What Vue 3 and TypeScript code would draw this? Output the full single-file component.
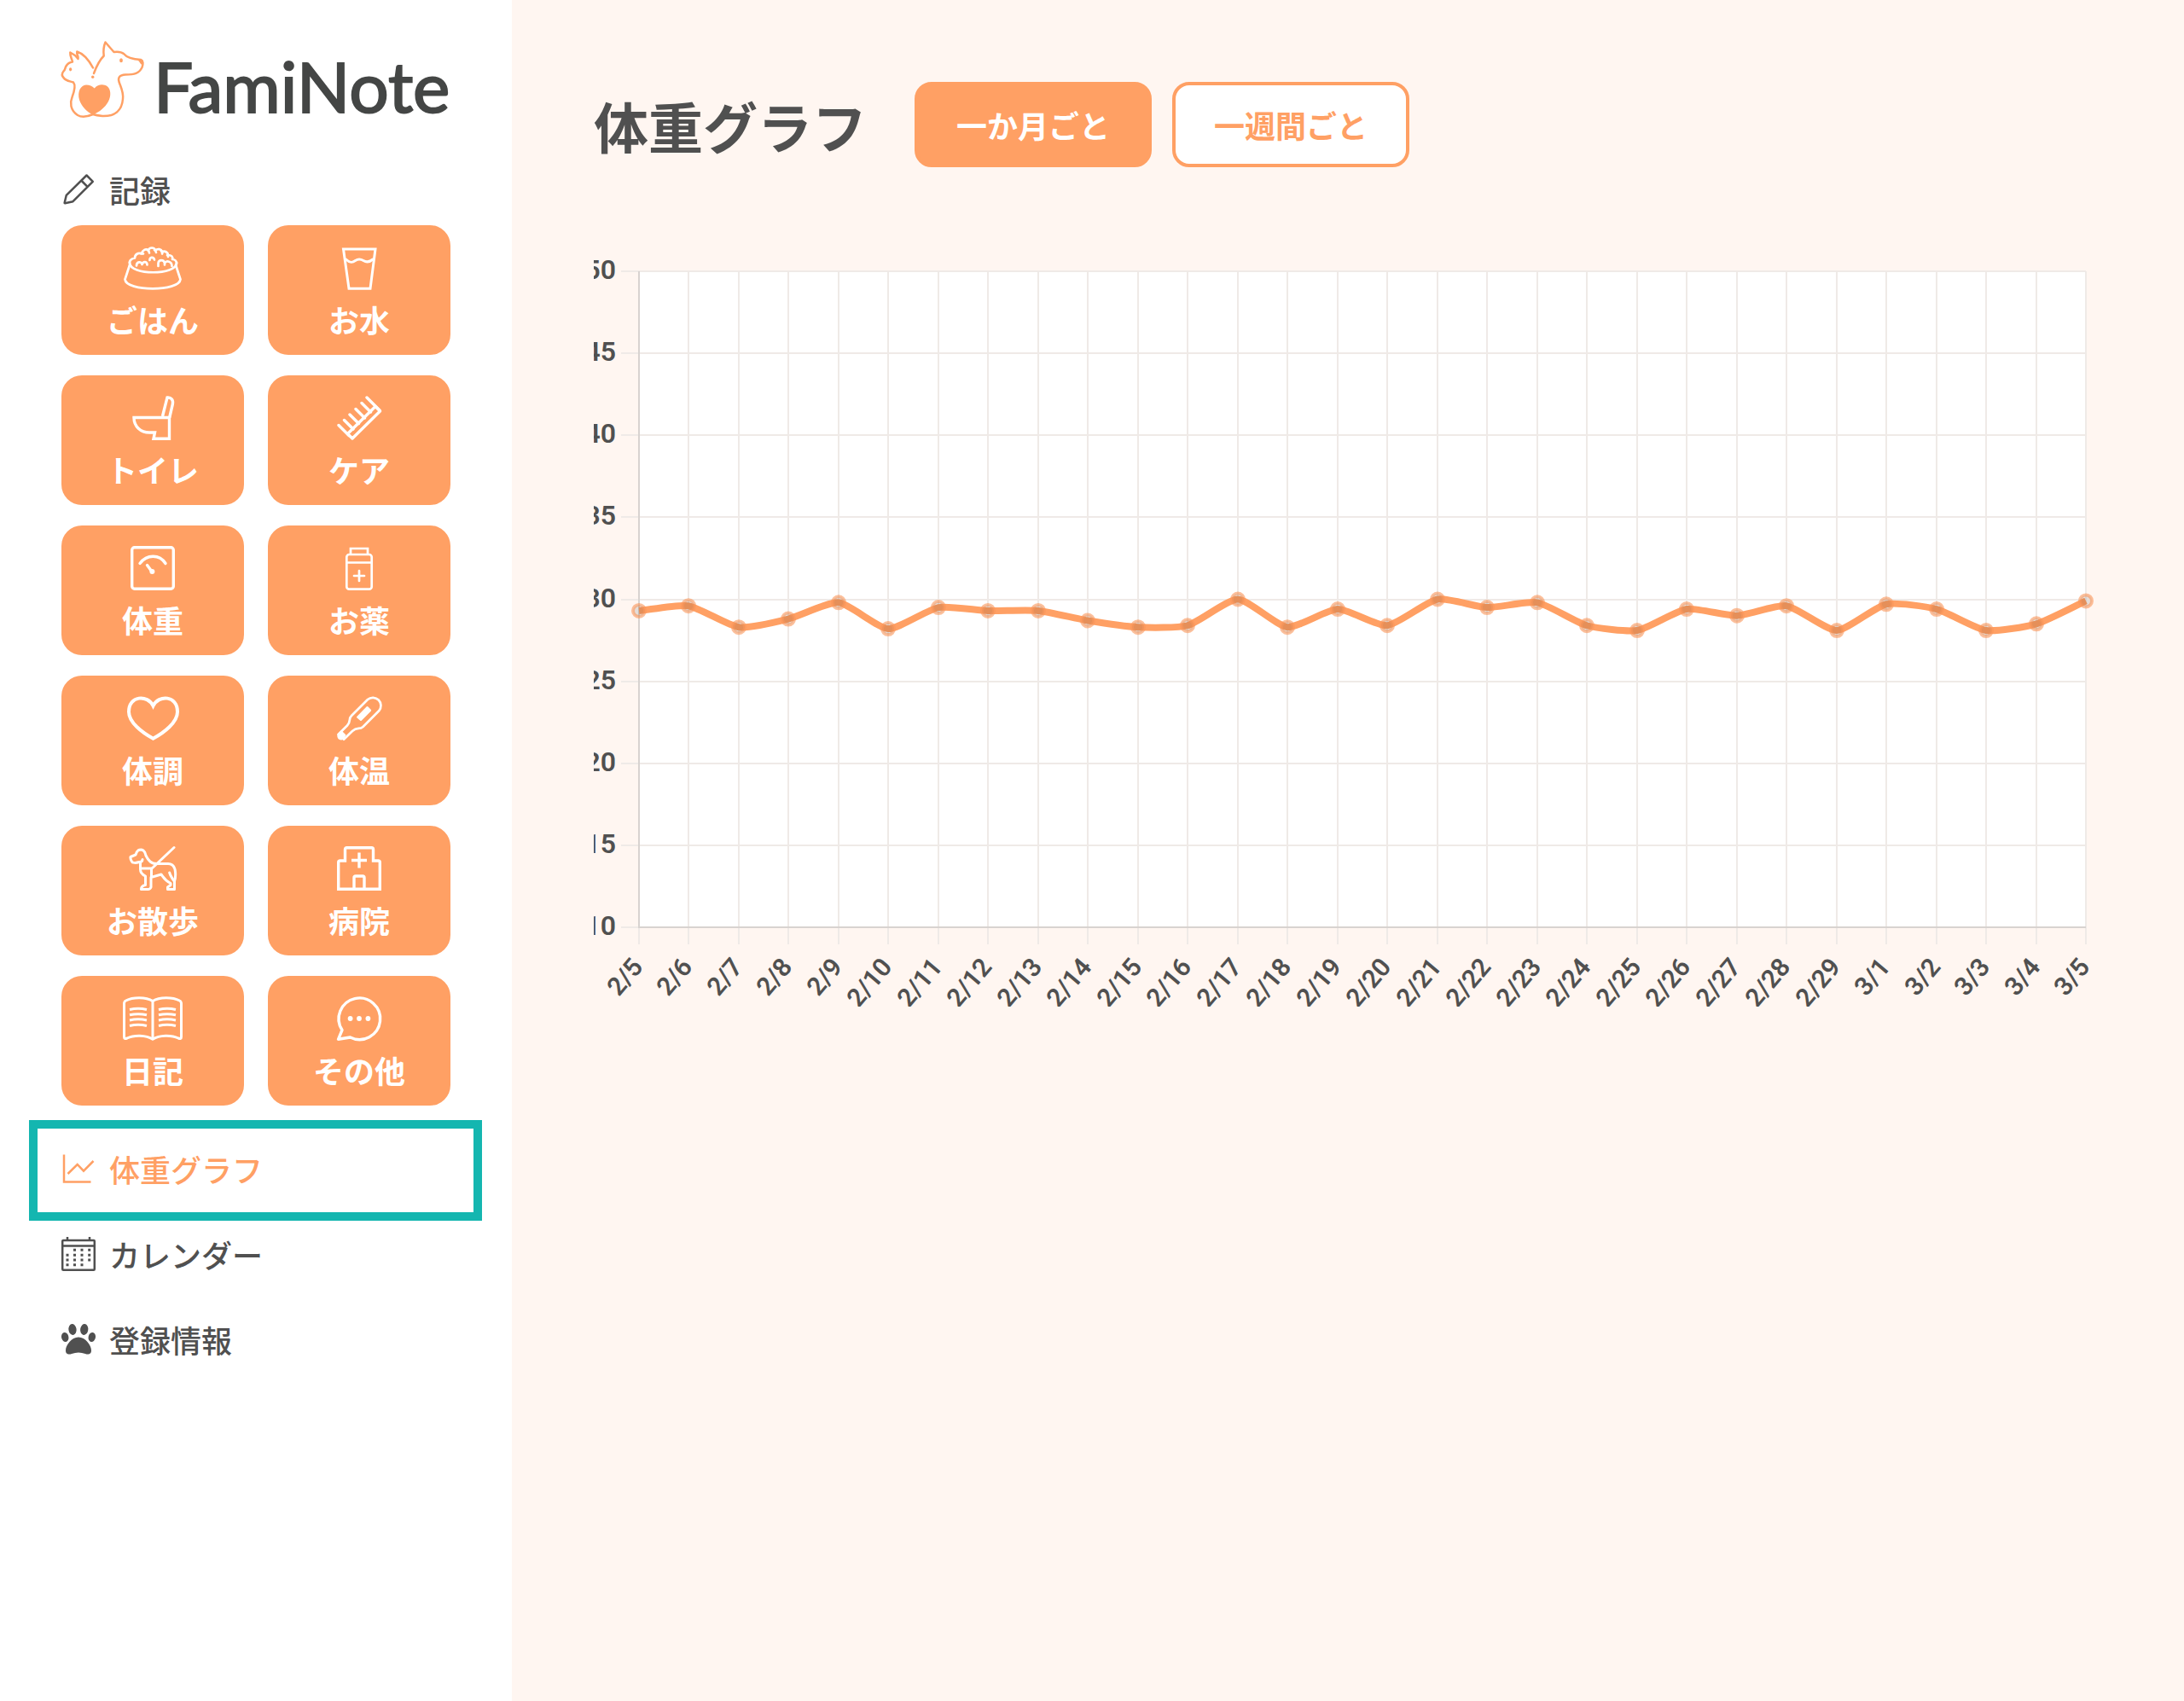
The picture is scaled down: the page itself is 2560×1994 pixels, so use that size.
<script setup lang="ts">
import { computed, ref } from 'vue'

interface Tile {
  label: string
  icon: string
}

type Range = 'month' | 'week'

const tiles: Tile[] = [
  { label: 'ごはん', icon: 'bowl' },
  { label: 'お水', icon: 'glass' },
  { label: 'トイレ', icon: 'toilet' },
  { label: 'ケア', icon: 'comb' },
  { label: '体重', icon: 'scale' },
  { label: 'お薬', icon: 'medicine' },
  { label: '体調', icon: 'heart' },
  { label: '体温', icon: 'thermometer' },
  { label: 'お散歩', icon: 'dog' },
  { label: '病院', icon: 'hospital' },
  { label: '日記', icon: 'book' },
  { label: 'その他', icon: 'chat' },
]

const range = ref<Range>('month')

const weights: number[] = [
  29.3, 29.6, 28.3, 28.8, 29.8, 28.2, 29.5, 29.3, 29.3, 28.7, 28.3, 28.4, 30, 28.3, 29.4,
  28.4, 30, 29.5, 29.8, 28.4, 28.1, 29.4, 29, 29.6, 28.1, 29.7, 29.4, 28.1, 28.5, 29.9,
]

const plot = { left: 53, right: 1749, top: 18, bottom: 787 }

const yTicks = [50, 45, 40, 35, 30, 25, 20, 15, 10].map((value) => ({
  value,
  y: Math.round(plot.top + ((50 - value) / 40) * (plot.bottom - plot.top)),
}))

const points = computed(() =>
  weights.map((weight, i) => ({
    label: i < 25 ? `2/${i + 5}` : `3/${i - 24}`,
    x: Math.round(plot.left + (i * (plot.right - plot.left)) / (weights.length - 1)),
    y: plot.top + ((50 - weight) / 40) * (plot.bottom - plot.top),
  })),
)

/* Smooth curve through all points; each knot shares one tangent. */
const linePath = computed(() => {
  const tension = 0.2
  const pts = points.value
  const knots = pts.map((p, i) => {
    const prev = pts[Math.max(i - 1, 0)]
    const next = pts[Math.min(i + 1, pts.length - 1)]
    const before = Math.hypot(p.x - prev.x, p.y - prev.y)
    const after = Math.hypot(next.x - p.x, next.y - p.y)
    const a = (tension * before) / (before + after)
    const b = (tension * after) / (before + after)
    const dx = next.x - prev.x
    const dy = next.y - prev.y
    return { p, inX: p.x - a * dx, inY: p.y - a * dy, outX: p.x + b * dx, outY: p.y + b * dy }
  })
  return knots
    .map((k, i) =>
      i === 0
        ? `M${k.p.x} ${k.p.y}`
        : `C${knots[i - 1].outX} ${knots[i - 1].outY} ${k.inX} ${k.inY} ${k.p.x} ${k.p.y}`,
    )
    .join('')
})
</script>

<template>
  <div class="app">
    <aside class="sidebar">
      <a class="logo" href="#">
        <svg class="logo-mark" viewBox="0 0 100 90" aria-hidden="true">
          <path
            class="logo-line"
            d="M38 38C41 30 45 22 49.700 17.500C49 12 50 5 51.500 1.500L61.500 13C66 12.500 70 12.500 73 15C77 20 84 21.500 93 22C96 23 96 27 94.500 31C91 38 86 39.500 75 39.500C68 40 66 43 67.500 48C70 55 73 60 72 68C71 82 62 88.500 48 88C43 87.500 40 87 37 86C30 89 24 90 19 87C10 81 10 72 12.500 66C15.500 58 17 52 14 48.500C9 47 5 47 2.500 43C.5 41 .5 38 2.500 35.500C4.500 34 4 32 5.500 29.500C7.500 26 10 25 13 24.500C12 20 10 18 10.300 13.500L16 17L19.500 21C20.500 18 17.500 16 18.300 12.500C26 15 33 24 37 31.500"
          />
          <path
            class="logo-fill"
            d="M38.700 55.500C43 50 50 50.500 53.500 53C58 56.500 58.500 64 55 71C51 78 45 83 37 86.500C29 82.500 23.500 76.500 21 69C18.500 60 22 52 29 51.500C33 51.500 36 53 38.700 55.500ZM89 22L95 23C96 25 95 28 93.500 27.500C92 26 92 24.500 89 22Z"
          />
          <ellipse class="logo-fill" cx="70" cy="22.700" rx="1.900" ry="2.500" />
          <ellipse class="logo-fill" cx="10.600" cy="33.300" rx="1.600" ry="2.100" />
          <circle class="logo-fill" cx="36.700" cy="42.300" r="1.700" />
        </svg>
        <span class="logo-text">FamiNote</span>
      </a>

      <h2 class="section-title">
        <svg class="nav-icon" viewBox="0 0 40 40" aria-hidden="true">
          <path d="M29.500 1.500L36.800 8.800L13.500 32.200L4.200 34.200Q3.500 34.300 3.700 33.500L5.800 24.800Z M23.200 7.500L31 15.300" />
        </svg>
        <span class="nav-label">記録</span>
      </h2>

      <div class="tiles">
        <button v-for="tile in tiles" :key="tile.icon" class="tile" type="button">
          <svg class="tile-icon" viewBox="-36 0 72 52" aria-hidden="true">
            <g v-if="tile.icon === 'bowl'" class="thin">
              <path d="M-27 22.500C-29 29-31 35-32.500 39.500C-31 54 31 54 32.500 39.500C31 35 29 29 27 22.500" />
              <path d="M-27 20C-27 35 28 35 28 20" />
              <path d="M-27 21C-28 17-24 15-21 14.500C-21 10-17 8-13 9.500C-12 5-8 3-5 5.500C-4 1.500 2 1.500 3 5.500C6 3 10 4 11 7C15 6 18 8 18 11C22 11 24 13 23 16C26 16 28 18 28 21" />
              <path d="M-11 9.500q-1-1.500-3-.5M-4 8.500q0-2-2-3.500M4 8q0-1.500-2-3M11 9.500q1-1.500-1-3M18 13q0-1.500-1-2M-19 23.500C-19 18.500-13 18-12.500 22C-11 17.500-6.500 18.500-6.500 22.500M-3.500 17C-4 13.500 1 12.500 2 16.500M6.500 24V20.500C7 16 13 16 14 20.500C16 17 22.500 18 22.500 24M14 20.500v2" />
            </g>
            <g v-else-if="tile.icon === 'glass'" class="mid">
              <path class="square" d="M-18.500 4H19L13 50.300H-12Z" />
              <path d="M-15.500 16C-11 20.500-8 20-4.500 17.500Q0 14.500 5 17.500C9 20 12 19.500 16 16" />
            </g>
            <g v-else-if="tile.icon === 'toilet'">
              <path class="square" d="M-22 25.500H19.500V50.300H1L2.500 43H-4C-14 43-22 36-22 25.500Z" />
              <path class="square" d="M11.500 24L17 2C21.500 1.500 24.500 5 23.300 10L19.700 25.500" />
            </g>
            <g v-else-if="tile.icon === 'comb'">
              <path d="M-13.500 44.500L-8 50L24.500 18L19 12.500Z" />
              <path d="M-24 34.500L-12 46.500M-17.500 28.500L-7 39M-11 22L-.500 32.500M-4 15.500L6.500 26M3 8.500L13.500 19M9 2L24 17" />
            </g>
            <g v-else-if="tile.icon === 'scale'">
              <rect x="-24.300" y="1.700" width="48.600" height="48.600" rx="3" />
              <path d="M-15 20.500C-7 9.500 8 9.500 15 20.500M-6.500 22.500L-1 30" />
              <circle class="solid" cx="-.600" cy="30" r="3" />
            </g>
            <g v-else-if="tile.icon === 'medicine'" class="thin">
              <path class="square" d="M-10 9.500V3H10V9.500" />
              <rect x="-14.700" y="10" width="29.400" height="40.700" rx="3" />
              <path d="M-14.700 19.500H14.700M-6 35H6M0 29V41" />
            </g>
            <g v-else-if="tile.icon === 'heart'" class="bold">
              <path class="square" d="M.5 11.500C-6-2-28-1-28 18.500C-28 31-12 43 .5 49.700C13 43 29 31 29 18.500C29-1 7-2 .5 11.500Z" />
            </g>
            <g v-else-if="tile.icon === 'thermometer'" class="thin">
              <path d="M-24.500 45L-14 34.500C-9 29-13 27-9 23L10 4A9.400 9.400 0 0 1 23.200 17.300L4.500 36C0 40-2 35.500-8 41L-18 50.700" />
              <path class="solid" d="M-24.500 43.500L-21 40L-15.500 45.500L-18 50.500C-23 54-28 48-24.500 43.500ZM-2.700 24L8.500 12.500Q9.500 11.500 10.500 12.500L13.700 15.700Q14.700 16.700 13.700 17.700L3 28.500Q2 29.500 1 28.500L-2.500 25.500Q-3.500 24.700-2.700 24Z" />
            </g>
            <g v-else-if="tile.icon === 'dog'" class="mid">
              <path d="M-12 15.500C-12 18.500-15 18.500-16 18.500C-20 20-24 19.500-24.500 18Q-26.500 15-26 12.500L-20 10C-18 4-16 4-13.500 4C-9 4.500-9 8-8 11C-5 17-2 20.500 5 20.500H18C24 20.500 26 25 26.500 30C27 35 26.500 38 25.500 41V50.500H17.500V48L21 45.500V43.500C14 40 13 37 10 33L-2 36.500V48Q-3 50.500-5.500 50.500H-13.500C-13.500 47.500-11 46-8.500 45.500V35C-13 33-14.500 31-14.500 27V18.500" />
              <path d="M25 1.500L-1.500 26.500M-14 26H-1.500V36M19.700 31C20.500 34 23 38 25.500 41.500" />
            </g>
            <g v-else-if="tile.icon === 'hospital'">
              <path class="square" d="M-24.300 50.300V19q0-2 2-2H-16.500V3.700q0-2 2-2H14.500q2 0 2 2V17H22.300q2 0 2 2V50.300ZM-6 50V37q0-2 2-2H4q2 0 2 2V50M-9 16.500H9M0 7.500V25.500" />
            </g>
            <g v-else-if="tile.icon === 'book'" class="mid">
              <path d="M0 5.500C-8 .5-23 .5-31.500 5Q-33.500 6-33.500 8.500V47.500Q-33.500 50.500-30 49C-22 45-8 45 0 50.300C8 45 22 45 30 49Q33.500 50.500 33.500 47.500V8.500Q33.500 6 31.500 5C23 .5 8 .5 0 5.500Z" />
              <path class="butt" d="M0 5V50M-27 15.500Q-17 13-7 15.500M-27 21.800Q-17 19.500-7 21.800M-27 28Q-17 25.700-7 28M-27 34.500Q-17 32-7 34.500M7 15.500Q17 13 27 15.500M7 21.800Q17 19.500 27 21.800M7 28Q17 25.700 27 28M7 34.500Q17 32 27 34.500" />
            </g>
            <g v-else>
              <path d="M-20 39.500L-24.500 50.300L-10.500 48A24.300 24.300 0 1 0-20 39.500Z" />
              <circle class="solid" cx="-10.400" cy="26" r="2.900" />
              <circle class="solid" cx="0" cy="26" r="2.900" />
              <circle class="solid" cx="10.400" cy="26" r="2.900" />
            </g>
          </svg>
          <span class="tile-label">{{ tile.label }}</span>
        </button>
      </div>

      <nav class="nav">
        <a class="nav-link current" href="#" aria-current="page">
          <svg class="nav-icon" viewBox="0 0 40 40" aria-hidden="true">
            <path class="square" d="M3 1.500V33.500H34.500M7.500 24L18.700 13L26 20.700L37.500 9" />
          </svg>
          <span class="nav-label">体重グラフ</span>
        </a>
        <a class="nav-link" href="#">
          <svg class="nav-icon" viewBox="0 0 40 40" aria-hidden="true">
            <rect x="1.200" y="2" width="37.600" height="34.800" rx="1" />
            <path class="square" d="M1.200 8.500H38.800M7 -2V2M33 -2V2" />
            <path class="dots" d="M14 13.300h3M22.500 13.300h3M31.200 13.300h3M5.500 19.300h3M14 19.300h3M22.500 19.300h3M31.200 19.300h3M5.500 25h3M14 25h3M22.500 25h3M31.200 25h3M5.500 30.700h3M14 30.700h3M22.500 30.700h3" />
          </svg>
          <span class="nav-label">カレンダー</span>
        </a>
        <a class="nav-link" href="#">
          <svg class="nav-icon filled" viewBox="0 0 40 40" aria-hidden="true">
            <ellipse cx="13" cy="6.500" rx="4.600" ry="6.500" transform="rotate(-8 13 6.500)" />
            <ellipse cx="26.700" cy="6.500" rx="4.600" ry="6.500" transform="rotate(8 26.700 6.500)" />
            <ellipse cx="4.200" cy="15.500" rx="4.200" ry="5.500" transform="rotate(-12 4.200 15.500)" />
            <ellipse cx="35.800" cy="15.500" rx="4.200" ry="5.500" transform="rotate(12 35.800 15.500)" />
            <path d="M20 15.500C12 15.500 5 25 5 31C5 36 9 36 12 35Q20 32 28 35C31 36 35 36 35 31C35 25 28 15.500 20 15.500Z" />
          </svg>
          <span class="nav-label">登録情報</span>
        </a>
      </nav>
    </aside>

    <main class="main">
      <header class="header">
        <h1 class="title">体重グラフ</h1>
        <div class="ranges">
          <button class="range" :class="{ active: range === 'month' }" type="button" @click="range = 'month'">
            一か月ごと
          </button>
          <button class="range" :class="{ active: range === 'week' }" type="button" @click="range = 'week'">
            一週間ごと
          </button>
        </div>
      </header>

      <svg class="chart" viewBox="0 0 1768 880" role="img" aria-label="体重グラフ">
        <rect
          class="plot"
          :x="plot.left"
          :y="plot.top"
          :width="plot.right - plot.left"
          :height="plot.bottom - plot.top"
        />
        <g v-for="tick in yTicks" :key="tick.value">
          <line class="grid" x1="32" :x2="plot.right" :y1="tick.y" :y2="tick.y" />
          <text class="tick" x="26" :y="tick.y + 9" text-anchor="end">{{ tick.value }}</text>
        </g>
        <g v-for="point in points" :key="point.label">
          <line class="grid" :x1="point.x" :x2="point.x" :y1="plot.top" y2="807" />
          <text class="tick date" :transform="`translate(${point.x + 6} 834) rotate(-50)`" text-anchor="end">
            {{ point.label }}
          </text>
        </g>
        <path class="axis" :d="`M${plot.left} ${plot.top}V${plot.bottom}H${plot.right}`" />
        <path class="line" :d="linePath" />
        <circle v-for="point in points" :key="point.label" class="dot" :cx="point.x" :cy="point.y" r="7" />
      </svg>
    </main>
  </div>
</template>

<style>
body {
  margin: 0;
  background: #fff6f1;
}
</style>

<style scoped>
.app {
  display: flex;
  min-height: 100vh;
  color: #505050;
  font-family: 'Noto Sans CJK JP', 'Noto Sans', sans-serif;
  font-size: 36px;
  line-height: 48px;
}

.sidebar {
  box-sizing: border-box;
  flex: 0 0 600px;
  padding: 48px 72px;
  background: #fff;
}

.logo {
  display: flex;
  align-items: center;
  gap: 8px;
  height: 90px;
  color: #444645;
  text-decoration: none;
}

.logo-mark {
  flex: none;
  width: 100px;
  height: 90px;
  overflow: visible;
}

.logo-line {
  fill: none;
  stroke: #ffa064;
  stroke-width: 2.500;
  stroke-linecap: round;
  stroke-linejoin: round;
}

.logo-fill {
  fill: #ffa064;
}

.logo-text {
  padding-top: 14px;
  font-family: Lato, sans-serif;
  font-size: 82px;
  font-weight: 400;
  line-height: 88px;
  -webkit-text-stroke: 2px #444645;
}

.section-title {
  display: flex;
  align-items: center;
  gap: 16px;
  margin: 60px 0 14px;
  font-size: 36px;
  font-weight: 500;
  line-height: 48px;
}

.nav-label {
  padding-bottom: 4px;
}

.nav-icon {
  flex: none;
  width: 40px;
  height: 40px;
  overflow: visible;
  fill: none;
  stroke: currentColor;
  stroke-width: 2.500;
  stroke-linejoin: round;
}

.nav-icon.filled {
  fill: currentColor;
  stroke: none;
}

.nav-icon .dots {
  stroke-width: 3;
}

.nav-icon .square,
.tile-icon .square {
  stroke-linecap: butt;
  stroke-linejoin: miter;
}

.tiles {
  display: grid;
  grid-template-columns: 1fr 1fr;
  gap: 24px 28px;
}

.tile {
  display: flex;
  flex-direction: column;
  align-items: center;
  gap: 10px;
  padding: 24px 0 18px;
  border: 0;
  border-radius: 24px;
  background: #ffa064;
  color: #fff;
  font: inherit;
  font-weight: 700;
}

.tile-icon {
  width: 72px;
  height: 52px;
  overflow: visible;
  fill: none;
  stroke: #fff;
  stroke-width: 3.400;
  stroke-linecap: round;
  stroke-linejoin: round;
}

.tile-icon .thin {
  stroke-width: 2.700;
}

.tile-icon .mid {
  stroke-width: 3;
}

.tile-icon .bold {
  stroke-width: 4;
}

.tile-icon .butt {
  stroke-linecap: butt;
}

.tile-icon .solid {
  fill: #fff;
  stroke: none;
}

.nav {
  margin-top: 26px;
}

.nav-link {
  position: relative;
  display: flex;
  align-items: center;
  gap: 16px;
  height: 100px;
  color: inherit;
  font-weight: 500;
  text-decoration: none;
}

.nav-link.current {
  color: #ffa064;
}

.nav-link.current::after {
  content: '';
  position: absolute;
  inset: -9px -37px -9px -38px;
  border: 10px solid #14b6b0;
}

.main {
  flex: 1;
  min-width: 0;
  padding: 96px;
}

.header {
  display: flex;
  align-items: center;
  gap: 56px;
}

.title {
  margin: 0;
  font-size: 64px;
  font-weight: 700;
  line-height: 96px;
}

.ranges {
  display: flex;
  gap: 24px;
}

.range {
  height: 100px;
  padding: 0 45px;
  border: 4px solid #ffa064;
  border-radius: 20px;
  background: #fff;
  color: #ffa064;
  font: inherit;
  font-weight: 700;
}

.range.active {
  background: #ffa064;
  color: #fff;
}

.chart {
  display: block;
  width: 100%;
  height: auto;
  margin-top: 104px;
}

.plot {
  fill: #fff;
}

.grid {
  stroke: #efeae7;
  stroke-width: 2;
  shape-rendering: crispEdges;
}

.axis {
  fill: none;
  stroke: #d8d3d0;
  stroke-width: 2;
  shape-rendering: crispEdges;
}

.tick {
  fill: #505050;
  font-family: Roboto, 'Liberation Sans', sans-serif;
  font-size: 32px;
  font-weight: 600;
}

.tick.date {
  font-size: 30px;
}

.line {
  fill: none;
  stroke: #ffa064;
  stroke-width: 8;
  stroke-linejoin: round;
}

.dot {
  fill: rgba(0, 0, 0, 0.1);
  stroke: rgba(250, 150, 90, 0.6);
  stroke-width: 4;
}
</style>
